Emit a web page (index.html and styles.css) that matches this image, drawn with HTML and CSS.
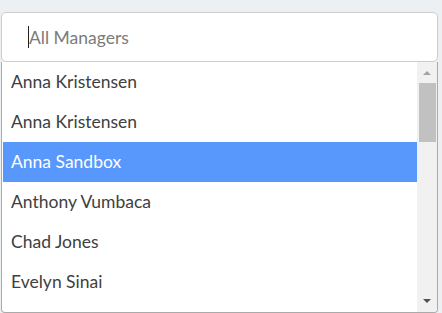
FILE: index.html
```html
<html lang="en">
<head>
    <meta charset="UTF-8">
    <meta name="viewport" content="width=device-width, initial-scale=1.0">
    <title>Managers</title>
    <link rel="stylesheet" href="styles.css">
</head>
<body>
    <div class="picker">
        <div class="search">
            <span class="caret"></span><span class="placeholder">All Managers</span>
        </div>
        <div class="dropdown">
            <ul class="results">
                <li>Anna Kristensen</li>
                <li>Anna Kristensen</li>
                <li class="active">Anna Sandbox</li>
                <li>Anthony Vumbaca</li>
                <li>Chad Jones</li>
                <li>Evelyn Sinai</li>
            </ul>
            <!-- scrollbar drawn by hand, the browser hides native ones -->
            <div class="scrollbar">
                <div class="arrow up"></div>
                <div class="track"><div class="thumb"></div></div>
                <div class="arrow down"></div>
            </div>
        </div>
    </div>
</body>
</html>
```

FILE: styles.css
```css
body {
    background: #edf0f3;
    font-family: Lato, 'Open Sans', sans-serif;
    margin: 0;
    padding: 12px 4px 0 1px;
}
.picker {
    width: 437px;
}
.search {
    height: 48px;
    background: #fff;
    border: 1px solid #ccc;
    border-radius: 5px;
    display: flex;
    align-items: center;
    padding-left: 26px;
    font-size: 17.5px;
}
.caret {
    width: 1px;
    height: 22px;
    background: #222;
}
.placeholder {
    color: #7b7b7b;
}
.dropdown {
    background: #fff;
    border: 1px solid #aaa;
    border-top: none;
    border-radius: 0 0 4px 4px;
    overflow: hidden;
    display: flex;
    height: 250px;
}
.results {
    flex: 1;
    list-style: none;
    margin: 0;
    padding: 0 0 0 1px;
    overflow: hidden;
}
.results li {
    height: 40px;
    line-height: 40px;
    padding-left: 8px;
    font-size: 17.5px;
    color: #404040;
}
.results li.active {
    background: #5897fb;
    color: #fff;
}
.scrollbar {
    width: 20px;
    background: #f1f1f1;
    display: flex;
    flex-direction: column;
}
.arrow {
    height: 21px;
    display: flex;
    justify-content: center;
    align-items: flex-start;
}
.arrow::after {
    content: "";
    width: 0;
    height: 0;
    border-left: 4px solid transparent;
    border-right: 4px solid transparent;
}
.arrow.up::after {
    margin-top: 9px;
    border-bottom: 4px solid #a3a3a3;
}
.arrow.down::after {
    margin-top: 8px;
    border-top: 4px solid #505050;
}
.track {
    flex: 1;
    padding: 0 1px 0 2px;
}
.thumb {
    height: 59px;
    background: #c1c1c1;
}
```
